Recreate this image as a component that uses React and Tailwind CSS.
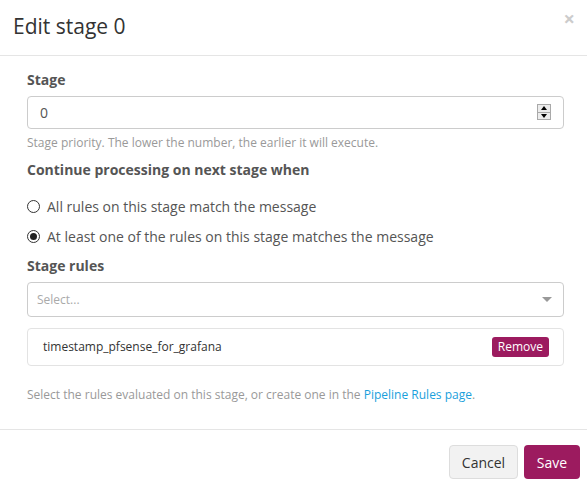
export default function App() {
  return (
    <div
      className="w-[587px] h-[481px] bg-white overflow-hidden text-[#333]"
      style={{ fontFamily: '"Open Sans", "Liberation Sans", sans-serif' }}
    >
      {/* Header */}
      <div className="h-[56px] border-b border-[#e5e5e5] pl-[13px] pr-[12px] flex items-start justify-between">
        <h4 className="mt-[13px] text-[21px] leading-[26px] text-[#333]">Edit stage 0</h4>
        <button className="mt-[6px] text-[20px] leading-[26px] font-bold text-[#cccccc]">×</button>
      </div>

      {/* Body */}
      <div className="pl-[27px] pr-[23px] pt-[14px] pb-[26px] border-b border-[#e5e5e5]">
        <label className="block text-[14px] leading-[20px] font-bold text-[#555]">Stage</label>
        <div className="relative mt-[6px]">
          <input
            type="text"
            defaultValue="0"
            className="w-full h-[33px] border border-[#ccc] rounded-[4px] px-[12px] text-[14px] text-[#555] outline-none"
          />
          <div className="absolute right-[13px] top-[8px] w-[14px] h-[16px] border border-[#a9a9a9] bg-[#ececec] flex flex-col">
            <div className="flex-1 flex items-center justify-center border-b border-[#a9a9a9]">
              <div className="w-0 h-0 border-x-[3px] border-b-[4px] border-x-transparent border-b-black" />
            </div>
            <div className="flex-1 flex items-center justify-center">
              <div className="w-0 h-0 border-x-[3px] border-t-[4px] border-x-transparent border-t-black" />
            </div>
          </div>
        </div>
        <p className="mt-[5px] text-[12px] leading-[17px] text-[#999]">
          Stage priority. The lower the number, the earlier it will execute.
        </p>

        <label className="block mt-[9px] text-[14px] leading-[20px] font-bold text-[#555]">
          Continue processing on next stage when
        </label>
        <div className="mt-[16px] flex items-center h-[20px] text-[14px] text-[#555]">
          <span className="w-[13px] h-[13px] rounded-full border border-[#333] mr-[7px]" />
          All rules on this stage match the message
        </div>
        <div className="mt-[10px] flex items-center h-[20px] text-[14px] text-[#555]">
          <span className="w-[13px] h-[13px] rounded-full border border-[#333] mr-[7px] flex items-center justify-center">
            <span className="w-[7px] h-[7px] rounded-full bg-[#222]" />
          </span>
          At least one of the rules on this stage matches the message
        </div>

        <label className="block mt-[10px] text-[14px] leading-[20px] font-bold text-[#555]">Stage rules</label>
        <div className="mt-[6px] h-[35px] border border-[#ccc] rounded-[4px] flex items-center justify-between pl-[9px] pr-[11px]">
          <span className="text-[12px] text-[#aaa]">Select...</span>
          <div className="w-0 h-0 border-x-[5px] border-t-[5px] border-x-transparent border-t-[#999]" />
        </div>

        <div className="mt-[11px] h-[38px] border border-[#e3e3e3] rounded-[4px] flex items-center justify-between pl-[15px] pr-[14px]">
          <span className="text-[12px] text-[#333]">timestamp_pfsense_for_grafana</span>
          <button className="h-[20px] px-[6px] rounded-[3px] bg-[#9c1b5f] text-white text-[12px] leading-[20px]">
            Remove
          </button>
        </div>

        <p className="mt-[20px] text-[12px] leading-[17px] text-[#999]">
          Select the rules evaluated on this stage, or create one in the{" "}
          <a className="text-[#1a9fdc]">Pipeline Rules page</a>.
        </p>
      </div>

      {/* Footer */}
      <div className="flex justify-end gap-[6px] pt-[15px] pr-[7px]">
        <button className="h-[34px] w-[69px] border border-[#ddd] rounded-[4px] bg-[#f2f2f2] text-[14px] text-[#333]">
          Cancel
        </button>
        <button className="h-[34px] w-[56px] rounded-[4px] bg-[#9c1b5f] text-[14px] text-white">
          Save
        </button>
      </div>
    </div>
  );
}
